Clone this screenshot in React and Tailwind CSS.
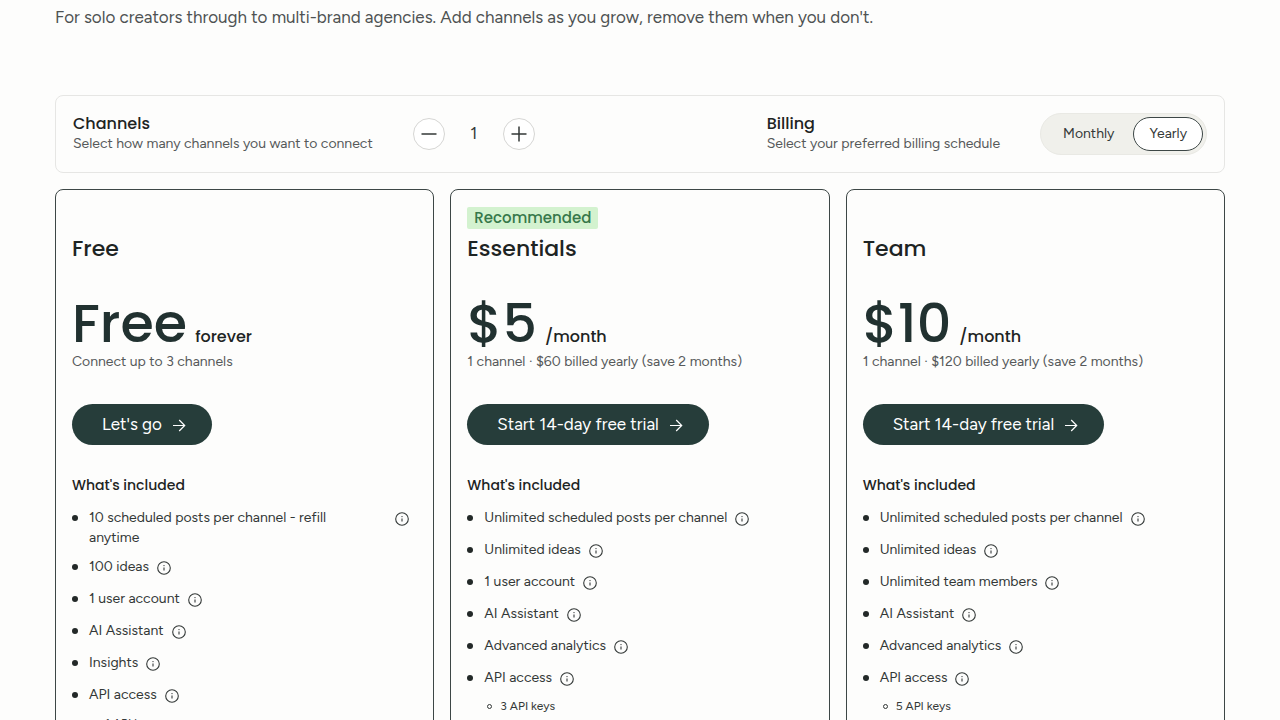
import { useState } from 'react';

const PLANS = [
  {
    id: 'free',
    name: 'Free',
    price: 'Free',
    period: 'forever',
    note: 'Connect up to 3 channels',
    cta: "Let's go",
    features: [
      '10 scheduled posts per channel - refill\nanytime',
      '100 ideas',
      '1 user account',
      'AI Assistant',
      'Insights',
      'API access',
    ],
    keys: '1 API key',
  },
  {
    id: 'essentials',
    name: 'Essentials',
    badge: 'Recommended',
    price: '$5',
    period: '/month',
    note: '1 channel · $60 billed yearly (save 2 months)',
    cta: 'Start 14-day free trial',
    features: [
      'Unlimited scheduled posts per channel',
      'Unlimited ideas',
      '1 user account',
      'AI Assistant',
      'Advanced analytics',
      'API access',
    ],
    keys: '3 API keys',
  },
  {
    id: 'team',
    name: 'Team',
    price: '$10',
    period: '/month',
    note: '1 channel · $120 billed yearly (save 2 months)',
    cta: 'Start 14-day free trial',
    features: [
      'Unlimited scheduled posts per channel',
      'Unlimited ideas',
      'Unlimited team members',
      'AI Assistant',
      'Advanced analytics',
      'API access',
    ],
    keys: '5 API keys',
  },
];

const InfoIcon = () => (
  <svg viewBox="0 0 16 16" className="size-4" fill="none" aria-hidden="true">
    <circle cx="8" cy="8" r="6.3" stroke="currentColor" strokeWidth="1.1" />
    <path d="M8 7.4v3.2" stroke="currentColor" strokeWidth="1.1" />
    <circle cx="8" cy="5.6" r="0.7" fill="currentColor" />
  </svg>
);

const ArrowIcon = () => (
  <svg viewBox="0 0 14 14" className="size-3.5" fill="none" stroke="currentColor" strokeWidth="1.2" aria-hidden="true">
    <path d="M1 7.5h11.5M7.2 2l5.5 5.5L7.2 13" />
  </svg>
);

const StepIcon = ({ plus }) => (
  <svg viewBox="0 0 16 16" className="size-4" fill="none" stroke="currentColor" strokeWidth="1.5" aria-hidden="true">
    <path d={plus ? 'M.5 8h15M8 .5v15' : 'M.5 8h15'} />
  </svg>
);

function PlanCard({ plan }) {
  return (
    <article className="rounded-lg border border-[#3d4746] px-4 pt-4 pb-8">
      <div className="h-6">
        {plan.badge && (
          <span className="inline-block rounded-xs bg-[#d3f2cf] px-[7px] font-['Poppins','Lexend',sans-serif] text-[15px] leading-[22px] font-medium text-[#36784a]">
            {plan.badge}
          </span>
        )}
      </div>
      <h2 className="mt-[5px] font-['Poppins','Lexend',sans-serif] text-[22px] leading-7 font-medium text-[#1d2423]">
        {plan.name}
      </h2>
      <p className="mt-[31px] flex items-baseline gap-2 font-['Poppins','Lexend',sans-serif] font-medium text-[#213130]">
        <span className="text-[54px] leading-[58px]">{plan.price}</span>
        <span className="text-base leading-6 text-[#1d2423]">{plan.period}</span>
      </p>
      <p className="text-sm text-[#56595a]">{plan.note}</p>
      <button
        type="button"
        className="mt-8 flex h-[41px] items-center gap-2.5 rounded-full bg-[#263d3a] pr-[26px] pl-[30px] text-[17px] text-white"
      >
        {plan.cta}
        <ArrowIcon />
      </button>
      <h3 className="mt-[30px] font-['Poppins','Lexend',sans-serif] text-sm font-medium text-[#1d2423]">
        What's included
      </h3>
      <ul className="mt-[13px] space-y-[9px] text-sm text-[#333837]">
        {plan.features.map((feature) => (
          <li key={feature} className="flex min-h-[23px] items-start pr-[7px]">
            <span className="mt-[7px] mr-[11px] size-1.5 shrink-0 rounded-full bg-[#232928]" />
            <span className={feature.includes('\n') ? 'grow whitespace-pre-line' : ''}>{feature}</span>
            <button type="button" aria-label={`About ${feature}`} className="mt-[3px] ml-[7px] shrink-0">
              <InfoIcon />
            </button>
          </li>
        ))}
      </ul>
      <ul className="mt-[7px] ml-5 text-xs text-[#333837]">
        <li className="flex items-center gap-2">
          <span className="size-[5px] rounded-full border border-[#333837]" />
          {plan.keys}
        </li>
      </ul>
    </article>
  );
}

export default function App() {
  const [channels, setChannels] = useState(1);
  const [billing, setBilling] = useState('Yearly');

  return (
    <main className="h-screen overflow-hidden bg-[#fdfdfc] px-[55px] font-['Figtree','Lato',sans-serif] text-[#333837]">
      <p className="pt-[5px] text-[17px] leading-6 text-[#4e5252]">
        For solo creators through to multi-brand agencies. Add channels as you grow, remove them when you don't.
      </p>

      <section className="mt-[66px] flex items-center justify-between rounded-lg border border-[#e6e6e4] p-[17px]">
        <div className="flex items-center gap-10">
          <div>
            <h2 className="font-['Poppins','Lexend',sans-serif] text-base leading-5 font-medium text-[#1d2423]">
              Channels
            </h2>
            <p className="text-sm text-[#56595a]">Select how many channels you want to connect</p>
          </div>
          <div className="flex items-center">
            <button
              type="button"
              aria-label="Remove channel"
              onClick={() => setChannels(Math.max(1, channels - 1))}
              className="flex size-8 items-center justify-center rounded-full border border-[#d6d6d4] bg-white"
            >
              <StepIcon />
            </button>
            <input
              aria-label="Number of channels"
              value={channels}
              onChange={(e) => setChannels(Number(e.target.value) || 1)}
              className="w-[58px] text-center text-[17px]"
            />
            <button
              type="button"
              aria-label="Add channel"
              onClick={() => setChannels(channels + 1)}
              className="flex size-8 items-center justify-center rounded-full border border-[#d6d6d4] bg-white"
            >
              <StepIcon plus />
            </button>
          </div>
        </div>
        <div className="flex items-center gap-10">
          <div>
            <h2 className="font-['Poppins','Lexend',sans-serif] text-base leading-5 font-medium text-[#1d2423]">
              Billing
            </h2>
            <p className="text-sm text-[#56595a]">Select your preferred billing schedule</p>
          </div>
          <div className="flex rounded-full border border-[#e9e9e4] bg-[#f0f0eb] p-[3px]">
            {['Monthly', 'Yearly'].map((option) => (
              <button
                key={option}
                type="button"
                aria-pressed={billing === option}
                onClick={() => setBilling(option)}
                className={
                  billing === option
                    ? 'h-[34px] rounded-full border border-[#3d4746] bg-white px-[15px] text-sm'
                    : 'h-[34px] rounded-full border border-transparent px-[18px] text-sm'
                }
              >
                {option}
              </button>
            ))}
          </div>
        </div>
      </section>

      <section className="mt-4 grid grid-cols-3 gap-4">
        {PLANS.map((plan) => (
          <PlanCard key={plan.id} plan={plan} />
        ))}
      </section>
    </main>
  );
}
